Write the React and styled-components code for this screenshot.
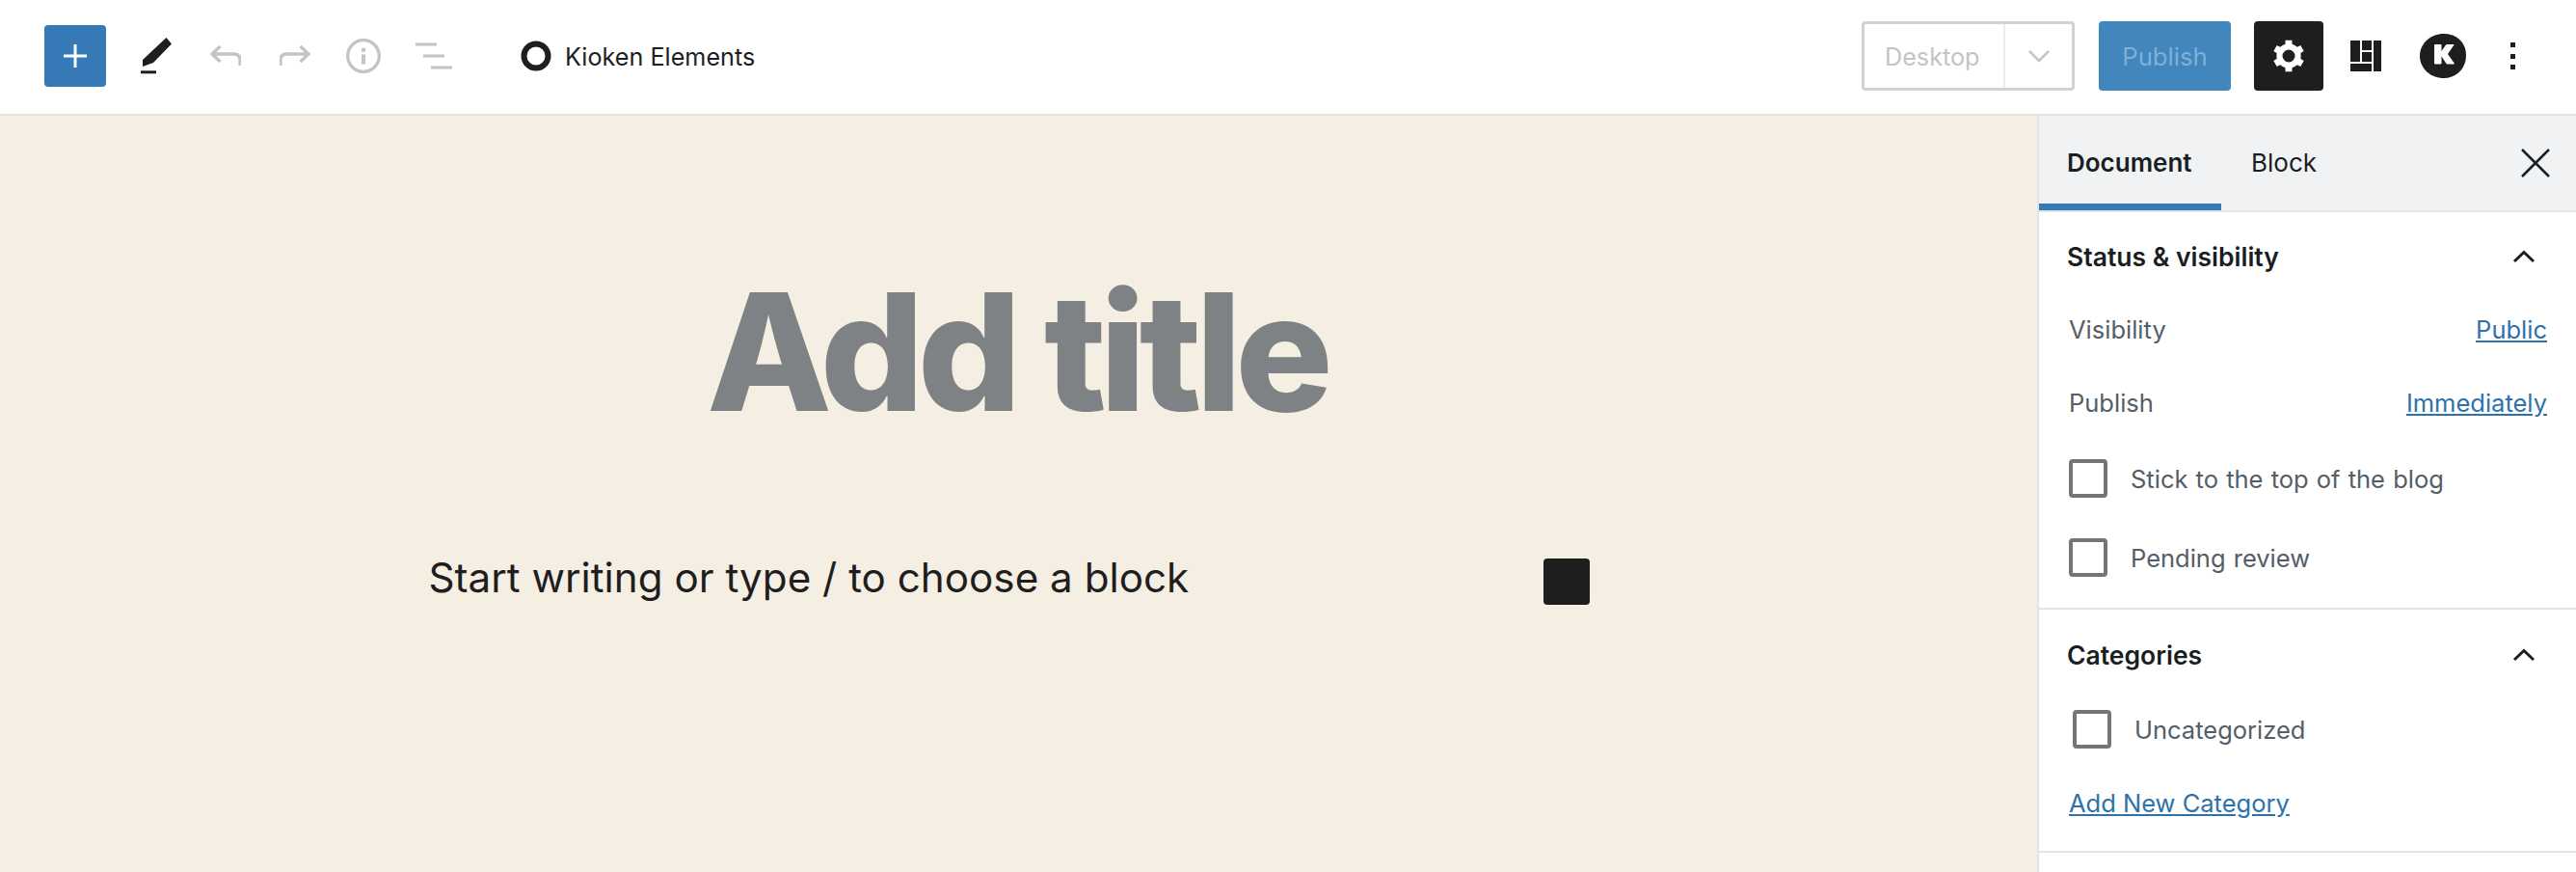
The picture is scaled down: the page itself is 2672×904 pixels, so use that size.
import React from 'react';
import styled, { createGlobalStyle } from 'styled-components';

const GlobalStyle = createGlobalStyle`
  html, body {
    margin: 0;
    padding: 0;
    height: 904px;
    overflow: hidden;
    background: #fff;
    font-family: Inter, "Liberation Sans", sans-serif;
  }
`;

const Page = styled.div`
  width: 2672px;
  height: 904px;
  display: flex;
  flex-direction: column;
  overflow: hidden;
`;

const Toolbar = styled.header`
  flex: 0 0 120px;
  box-sizing: border-box;
  height: 120px;
  display: flex;
  align-items: center;
  background: #fff;
  border-bottom: 2px solid #e2e4e7;
  padding: 0 46px 2px;
`;

const Group = styled.div`
  display: flex;
  align-items: center;
`;

const AddButton = styled.div`
  width: 64px;
  height: 64px;
  border-radius: 4px;
  background: #357ab6;
  display: flex;
  align-items: center;
  justify-content: center;
`;

const ToolIcon = styled.svg`
  display: block;
  margin-left: ${(p) => p.$left || 0}px;
  flex: none;
`;

const SiteName = styled.span`
  margin-left: 14px;
  padding-top: 1px;
  font-size: 25.2px;
  color: #1e1e1e;
`;

const RightGroup = styled.div`
  margin-left: auto;
  display: flex;
  align-items: center;
  margin-right: 16px;
`;

const Select = styled.div`
  box-sizing: border-box;
  width: 221px;
  height: 72px;
  border: 3px solid #d2d2d2;
  border-radius: 4px;
  display: flex;
  align-items: center;
`;

const SelectLabel = styled.span`
  box-sizing: border-box;
  width: 146px;
  height: 100%;
  padding: 1px 0 0 21px;
  display: flex;
  align-items: center;
  border-right: 2px solid #ececec;
  font-size: 25.2px;
  color: #c4c4c4;
`;

const SelectArrow = styled.span`
  flex: 1;
  display: flex;
  align-items: center;
  justify-content: center;
`;

const PublishButton = styled.div`
  width: 137px;
  height: 72px;
  margin-left: 25px;
  border-radius: 4px;
  background: #4186bc;
  color: #7fb0d6;
  font-size: 25.7px;
  display: flex;
  align-items: center;
  justify-content: center;
`;

const SettingsButton = styled.div`
  width: 72px;
  height: 72px;
  margin-left: 24px;
  border-radius: 4px;
  background: #1e1e1e;
  display: flex;
  align-items: center;
  justify-content: center;
`;

const Body = styled.div`
  flex: 1;
  display: flex;
  min-height: 0;
`;

const Canvas = styled.main`
  flex: 1;
  background: #f5eee3;
  display: flex;
  flex-direction: column;
  align-items: center;
  padding-top: 150px;
`;

const Title = styled.h1`
  margin: 0 0 0 -4px;
  font-size: 169px;
  line-height: 190px;
  font-weight: 800;
  letter-spacing: -6.8px;
  color: #7e8285;
`;

const Appender = styled.div`
  position: relative;
  width: 1224px;
  margin-top: 103px;
  font-size: 42.2px;
  line-height: 72px;
  color: #1e1e1e;
`;

const AppenderSquare = styled.span`
  position: absolute;
  left: 1156px;
  top: 16px;
  width: 48px;
  height: 48px;
  border-radius: 4px;
  background: #1e1e1e;
`;

const Sidebar = styled.aside`
  flex: 0 0 559px;
  box-sizing: border-box;
  background: #fff;
  border-left: 2px solid #e2e4e7;
`;

const Tabs = styled.div`
  box-sizing: border-box;
  height: 100px;
  display: flex;
  align-items: stretch;
  background: #f1f2f4;
  border-bottom: 2px solid #e2e4e7;
`;

const Tab = styled.div`
  box-sizing: border-box;
  height: 98px;
  padding: 6px 0 0 ${(p) => (p.$active ? 29 : 31)}px;
  width: ${(p) => p.$width}px;
  display: flex;
  align-items: center;
  font-size: 26px;
  font-weight: ${(p) => (p.$active ? 600 : 400)};
  color: #191e23;
  border-bottom: 7px solid ${(p) => (p.$active ? '#357ab6' : 'transparent')};
`;

const CloseIcon = styled.svg`
  margin: 34px 27px 0 auto;
  display: block;
`;

const Panel = styled.section`
  box-sizing: border-box;
  height: ${(p) => p.$height}px;
  border-bottom: 2px solid #e2e4e7;
  padding: 0 30px 0 29px;
`;

const PanelHead = styled.div`
  box-sizing: border-box;
  height: 83px;
  padding-top: ${(p) => p.$top || 10}px;
  display: flex;
  align-items: center;
  justify-content: space-between;
  font-size: 26.5px;
  font-weight: 600;
  color: #191e23;
`;

const Row = styled.div`
  height: ${(p) => p.$height || 76}px;
  display: flex;
  align-items: center;
  justify-content: space-between;
  padding-left: 2px;
  font-size: 25.5px;
  color: #555d66;
`;

const TextLink = styled.a`
  color: #2d72aa;
  text-decoration: underline;
  font-size: 25.5px;
`;

const CheckRow = styled.label`
  height: 82px;
  display: flex;
  align-items: center;
  gap: 24px;
  padding-left: ${(p) => p.$indent || 2}px;
  font-size: 25.5px;
  word-spacing: 1px;
  color: #555d66;
`;

const Box = styled.span`
  box-sizing: border-box;
  width: 40px;
  height: 40px;
  border: 4px solid #757575;
  border-radius: 4px;
`;

const Chevron = () => (
  <svg width="24" height="14" viewBox="0 0 24 14" style={{ marginRight: 12 }}>
    <path d="M2 12 L12 2.5 L22 12" fill="none" stroke="#191e23" strokeWidth="3" />
  </svg>
);

// six toothed cog, points worked out from the angle of each tooth
const cogPath = () => {
  const pts = [];
  for (let i = 0; i < 6; i++) {
    const a = -90 + i * 60;
    [[-30, 12.6], [-16, 12.8], [-12, 16.5], [12, 16.5], [16, 12.8]].forEach(([d, r]) => {
      const t = ((a + d) * Math.PI) / 180;
      pts.push(`${(17 + r * Math.cos(t)).toFixed(2)} ${(17 + r * Math.sin(t)).toFixed(2)}`);
    });
  }
  return `M${pts.join('L')}Z`;
};

export default function App() {
  return (
    <Page>
      <GlobalStyle />
      <Toolbar>
        <Group>
          <AddButton>
            <svg width="24" height="24" viewBox="0 0 24 24">
              <path d="M12 0v24M0 12h24" stroke="#fff" strokeWidth="3" />
            </svg>
          </AddButton>
          <ToolIcon $left={36} width="32" height="38" viewBox="0 0 32 38">
            <path d="M26.500 0 L32 6.500 L13 26 L2 30 L2 23 Z" fill="#1e1e1e" />
            <rect x="0" y="34.300" width="16" height="3" fill="#1e1e1e" />
          </ToolIcon>
          <ToolIcon $left={40} width="32" height="24" viewBox="0 0 32 24">
            <path d="M10.500 2 L2 10 L10.500 18 M2 10 H24 Q31 10 31 16 V22" fill="none" stroke="#c4c4c4" strokeWidth="3.300" />
          </ToolIcon>
          <ToolIcon $left={40} width="32" height="24" viewBox="0 0 32 24">
            <path d="M21.500 2 L30 10 L21.500 18 M30 10 H8 Q1 10 1 16 V22" fill="none" stroke="#c4c4c4" strokeWidth="3.300" />
          </ToolIcon>
          <ToolIcon $left={37} width="36" height="36" viewBox="0 0 36 36">
            <circle cx="18" cy="18" r="16.300" fill="none" stroke="#c4c4c4" strokeWidth="3.300" />
            <path d="M18 9.700v4M18 16.400v10" stroke="#c4c4c4" strokeWidth="4" />
          </ToolIcon>
          <ToolIcon $left={36} width="38" height="28" viewBox="0 0 38 28">
            <path d="M0 2h22M8 14h22M16 26h22" stroke="#c4c4c4" strokeWidth="3" />
          </ToolIcon>
          <ToolIcon $left={71} width="32" height="32" viewBox="0 0 32 32">
            <circle cx="16" cy="16" r="12.500" fill="none" stroke="#1e1e1e" strokeWidth="6" />
          </ToolIcon>
          <SiteName>Kioken Elements</SiteName>
        </Group>
        <RightGroup>
          <Select>
            <SelectLabel>Desktop</SelectLabel>
            <SelectArrow>
              <svg width="22" height="13" viewBox="0 0 22 13">
                <path d="M1 1 L11 11 L21 1" fill="none" stroke="#c4c4c4" strokeWidth="2.500" />
              </svg>
            </SelectArrow>
          </Select>
          <PublishButton>Publish</PublishButton>
          <SettingsButton>
            <svg width="34" height="34" viewBox="0 0 34 34">
              <path fill="#fff" fillRule="evenodd" d={`${cogPath()}M17 10.500a6.500 6.500 0 1 0 0 13 6.500 6.500 0 0 0 0-13z`} />
            </svg>
          </SettingsButton>
          <ToolIcon $left={28} width="32" height="32" viewBox="0 0 32 32">
            <path fill="#1e1e1e" d="M0 0h10v22H0zM12 0h10v10H12zM12 12h10v10H12zM0 24h22v8H0zM24 0h8v32h-8z" />
          </ToolIcon>
          <ToolIcon $left={40} width="48" height="46" viewBox="0 0 48 46">
            <path fill="#1e1e1e" d="M25 0C38 0 48 9 48 22C48 36 38 46 25 46C11 46 0 36 0 23C0 10 11 0 25 0Z" />
            <path
              fill="#fff"
              stroke="#fff"
              strokeLinejoin="round"
              d="M15.500 11.500h6.500v8l5.500-8h7.500l-6.500 9.500 7 10h-7.500l-6-9v9h-6.500z"
            />
          </ToolIcon>
          <ToolIcon $left={46} width="6" height="28" viewBox="0 0 6 28">
            <path fill="#1e1e1e" d="M0 0h5v5H0zM0 12h5v5H0zM0 23h5v5H0z" />
          </ToolIcon>
        </RightGroup>
      </Toolbar>
      <Body>
        <Canvas>
          <Title>Add title</Title>
          <Appender>
            Start writing or type / to choose a block
            <AppenderSquare />
          </Appender>
        </Canvas>
        <Sidebar>
          <Tabs>
            <Tab $active $width={189}>Document</Tab>
            <Tab $width={131}>Block</Tab>
            <CloseIcon width="30" height="30" viewBox="0 0 30 30">
              <path d="M1 1 L29 29 M29 1 L1 29" stroke="#191e23" strokeWidth="2.500" />
            </CloseIcon>
          </Tabs>
          <Panel $height={412}>
            <PanelHead $top={8}>Status &amp; visibility<Chevron /></PanelHead>
            <Row>Visibility<TextLink>Public</TextLink></Row>
            <Row>Publish<TextLink>Immediately</TextLink></Row>
            <CheckRow><Box />Stick to the top of the blog</CheckRow>
            <CheckRow><Box />Pending review</CheckRow>
          </Panel>
          <Panel $height={252}>
            <PanelHead>Categories<Chevron /></PanelHead>
            <CheckRow $indent={6}><Box />Uncategorized</CheckRow>
            <Row $height={70}><TextLink>Add New Category</TextLink></Row>
          </Panel>
        </Sidebar>
      </Body>
    </Page>
  );
}
